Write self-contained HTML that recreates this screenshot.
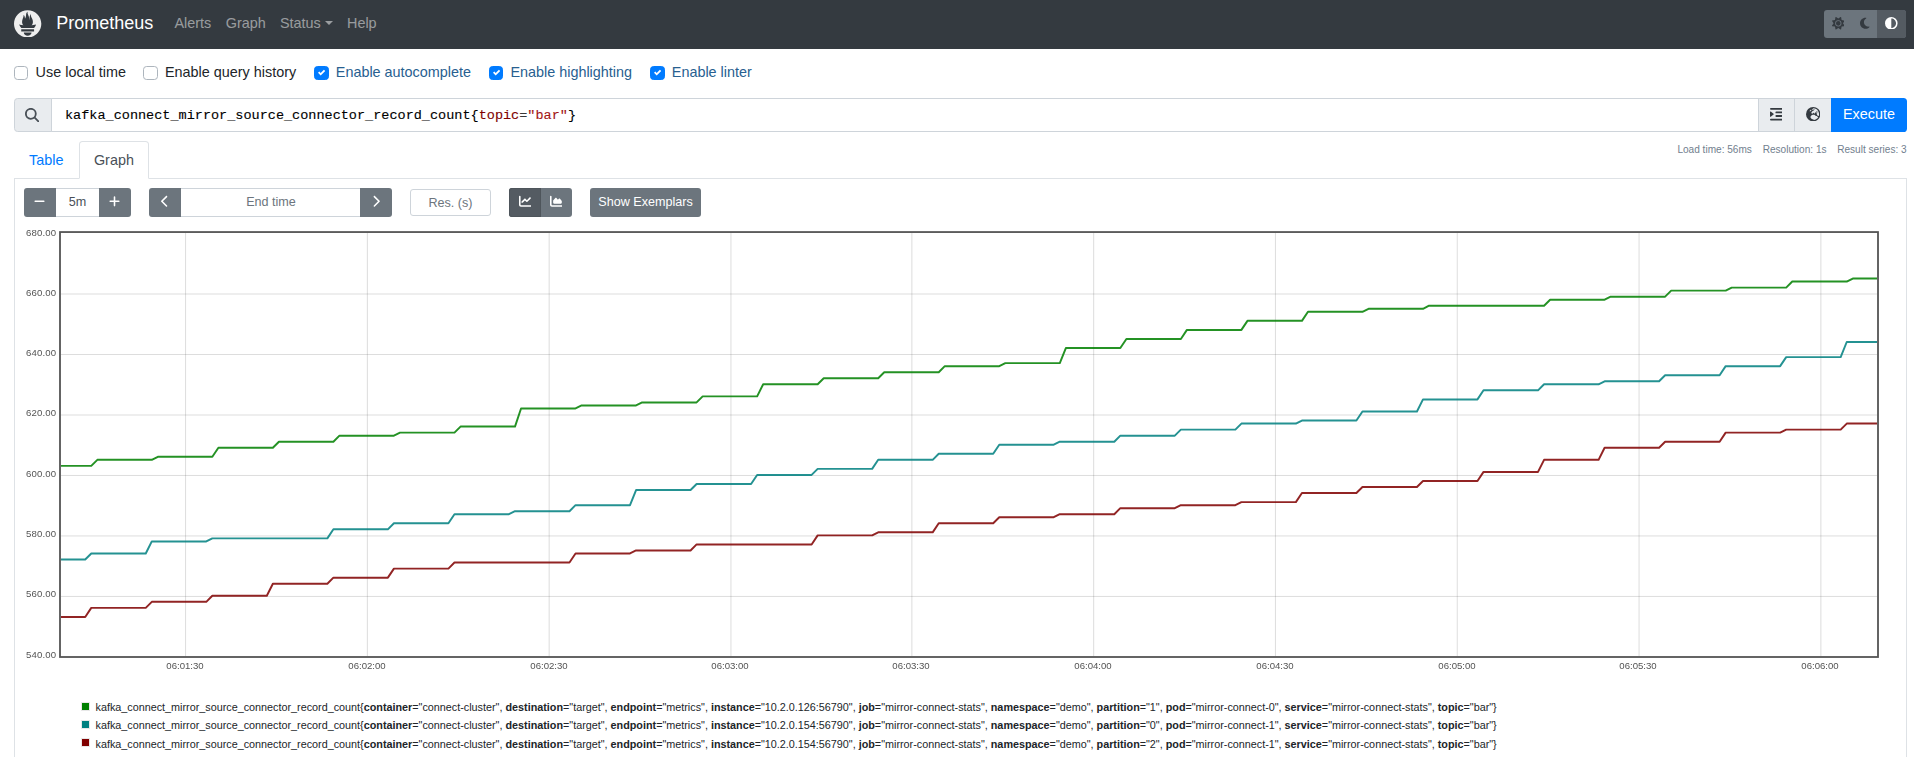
<!DOCTYPE html>
<html><head><meta charset="utf-8"><title>Prometheus Time Series Collection and Processing Server</title>
<style>
*{box-sizing:border-box;margin:0;padding:0}
html,body{width:1914px;height:757px;overflow:hidden;background:#fff}
body{font-family:"Liberation Sans",sans-serif;font-size:14.4px;color:#212529;position:relative;line-height:1.5}
.a{position:absolute;white-space:nowrap}
svg{display:block}
/* navbar */
#nav{left:0;top:0;width:1914px;height:49px;background:#343a40}
#brand{left:56.2px;top:10.2px;font-size:18px;line-height:27px;color:#fff}
.nl{top:12.6px;line-height:21.6px;color:rgba(255,255,255,.5)}
.caret{display:inline-block;margin-left:4.5px;vertical-align:2.3px;border-top:4.32px solid;border-right:4.32px solid transparent;border-left:4.32px solid transparent;width:0;height:0}
#theme{left:1824px;top:10px;width:82px;height:28px;background:#6c757d;border-radius:3px;overflow:hidden}
#theme .act{position:absolute;left:53px;top:0;width:29px;height:28px;background:#545b62}
/* checkboxes */
.cb{top:66px;width:14.4px;height:14.4px;border:1px solid #adb5bd;border-radius:3.6px;background:#fff}
.cb.on{background:#007bff;border-color:#007bff}
.cl{top:62.15px;line-height:21.6px}
.cl.on{color:#286090}
/* query */
#ig{left:14px;top:98px;width:1893px;height:34px}
#sa{left:0;top:0;width:38px;height:34px;background:#e9ecef;border:1px solid #ced4da;border-radius:3.6px 0 0 3.6px}
#qi{left:37px;top:0;width:1709px;height:34px;border:1px solid #ced4da;background:#fff}
#q{left:65px;top:105.8px;font-family:"Liberation Mono",monospace;font-size:13.52px;line-height:20px;color:#000;-webkit-text-stroke:0.12px}
#b1{left:1744px;top:0;width:37px;height:34px;background:#e9ecef;border:1px solid #ced4da}
#b2{left:1780px;top:0;width:38px;height:34px;background:#e9ecef;border:1px solid #ced4da}
#ex{left:1817px;top:0;width:76px;height:34px;background:#007bff;border-radius:0 3.6px 3.6px 0;color:#fff;text-align:center;line-height:33px}
#stats{left:0;top:141.5px;font-size:10.08px;line-height:15.1px;color:#71808e;word-spacing:0}
#stats span{position:absolute;top:0}
/* tabs */
#tabline{left:14px;top:178px;width:1893px;height:1px;background:#dee2e6}
#tabA{left:79px;top:141px;width:70px;height:38px;border:1px solid #dee2e6;border-bottom-color:#fff;border-radius:3.6px 3.6px 0 0;background:#fff}
#tT{left:29px;top:150.1px;color:#007bff;line-height:21.6px}
#tG{left:93.9px;top:150.1px;color:#495057;line-height:21.6px}
#pl{left:14px;top:178px;width:1px;height:600px;background:#dee2e6}
#pr{left:1906px;top:178px;width:1px;height:600px;background:#dee2e6}
/* controls */
.btn{top:188px;height:29px;background:#6c757d;color:#fff}
.inp{top:188px;height:29px;border:1px solid #ced4da;background:#fff;text-align:center;font-size:12.6px;line-height:27px;color:#495057}
.ph{color:#6c757d}
/* graph */
.yl{position:absolute;left:0;will-change:transform;width:56.2px;text-align:right;font-size:9.6px;letter-spacing:0.12px;line-height:13px;color:#545454}
.xl{position:absolute;top:658.5px;will-change:transform;width:60px;text-align:center;font-size:9.6px;line-height:13px;color:#545454}
.lg{position:absolute;left:95.5px;font-size:10.8px;letter-spacing:-0.002px;line-height:18.5px;color:#212529;white-space:nowrap}
.sw{position:absolute;left:81.6px;width:7px;height:7px;box-shadow:0 0 0 1px #e8e8e8}
</style></head><body>
<div class="a" id="nav"></div>
<svg class="a" style="left:14.2px;top:9.8px" width="27.8" height="27.5" viewBox="0 0 115.333 114"><path fill="#EEEEEE" d="M56.667,0.667C25.372,0.667,0,26.036,0,57.332c0,31.295,25.372,56.666,56.667,56.666s56.666-25.371,56.666-56.666C113.333,26.036,87.961,0.667,56.667,0.667z M56.667,106.722c-8.904,0-16.123-5.948-16.123-13.283H72.79C72.79,100.773,65.571,106.722,56.667,106.722z M83.297,89.04H30.034v-9.658h53.264V89.04z M83.106,74.411h-52.92c-0.176-0.203-0.356-0.403-0.526-0.609c-5.452-6.62-6.736-10.076-7.983-13.598c-0.021-0.116,6.611,1.355,11.314,2.413c0,0,2.42,0.56,5.958,1.205c-3.397-3.982-5.414-9.044-5.414-14.218c0-11.359,8.712-21.285,5.569-29.308c3.059,0.249,6.331,6.456,6.552,16.161c3.252-4.494,4.613-12.701,4.613-17.733c0-5.21,3.433-11.262,6.867-11.469c-3.061,5.045,0.793,9.37,4.219,20.099c1.285,4.03,1.121,10.812,2.113,15.113C63.797,33.534,65.333,20.5,71,16c-2.5,5.667,0.37,12.758,2.333,16.167c3.167,5.5,5.087,9.667,5.087,17.548c0,5.284-1.951,10.259-5.242,14.148c3.742-0.702,6.326-1.335,6.326-1.335l12.152-2.371C91.657,60.156,89.891,67.418,83.106,74.411z"/></svg>
<div class="a" id="brand">Prometheus</div>
<div class="a nl" style="left:174.4px">Alerts</div>
<div class="a nl" style="left:225.8px">Graph</div>
<div class="a nl" style="left:280px">Status<span class="caret"></span></div>
<div class="a nl" style="left:347px">Help</div>
<div class="a" id="theme"><div class="act"></div>
<svg class="a" style="left:7.90px;top:7.00px" width="12.60" height="12.60" viewBox="0 0 512 512"><path fill="#343a40" d="M361.5 1.2c5 2.100 8.600 6.600 9.600 11.900L391 121l107.900 19.800c5.300 1 9.800 4.600 11.900 9.600s1.500 10.700-1.600 15.200L446.900 256l62.300 90.300c3.100 4.500 3.700 10.200 1.600 15.200s-6.600 8.600-11.900 9.600L391 391 371.100 498.900c-1 5.300-4.600 9.800-9.600 11.900s-10.700 1.500-15.200-1.600L256 446.900l-90.300 62.300c-4.500 3.100-10.200 3.700-15.200 1.600s-8.600-6.600-9.600-11.900L121 391 13.100 371.100c-5.300-1-9.800-4.600-11.900-9.600s-1.500-10.700 1.600-15.200L65.100 256 2.800 165.700c-3.100-4.500-3.700-10.200-1.600-15.200s6.600-8.600 11.900-9.600L121 121 140.900 13.100c1-5.300 4.600-9.800 9.600-11.900s10.700-1.500 15.200 1.600L256 65.100 346.300 2.800c4.500-3.100 10.200-3.700 15.200-1.600zM160 256a96 96 0 1 1 192 0 96 96 0 1 1 -192 0zm224 0a128 128 0 1 0 -256 0 128 128 0 1 0 256 0z"/></svg>
<svg class="a" style="left:36.10px;top:7.00px" width="9.45" height="12.60" viewBox="0 0 384 512"><path fill="#343a40" d="M223.5 32C100 32 0 132.300 0 256S100 480 223.500 480c60.600 0 115.500-24.200 155.800-63.400c5-4.900 6.300-12.500 3.100-18.700s-10.100-9.700-17-8.500c-9.800 1.700-19.800 2.600-30.100 2.600c-96.900 0-175.500-78.800-175.500-176c0-65.800 36-123.100 89.300-153.300c6.100-3.500 9.200-10.500 7.700-17.300s-7.300-11.900-14.300-12.500c-6.300-.5-12.600-.8-19-.8z"/></svg>
<svg class="a" style="left:61.00px;top:6.90px" width="12.60" height="12.60" viewBox="0 0 512 512"><path fill="#fff" d="M448 256c0-106-86-192-192-192V448c106 0 192-86 192-192zM0 256a256 256 0 1 1 512 0A256 256 0 1 1 0 256z"/></svg>
</div>

<div class="a cb" style="left:14px;width:14px"></div><div class="a cl" style="left:35.6px">Use local time</div>
<div class="a cb" style="left:143.4px"></div><div class="a cl" style="left:165px">Enable query history</div>
<div class="a cb on" style="left:314.2px"><svg class="a" style="left:2.6px;top:2.2px" width="7.2" height="7.2" viewBox="0 0 8 8"><path fill="#fff" d="M6.564.75l-3.590 3.612-1.538-1.550L0 4.260l2.974 2.990L8 2.193z"/></svg></div><div class="a cl on" style="left:335.8px">Enable autocomplete</div>
<div class="a cb on" style="left:488.8px"><svg class="a" style="left:3.1px;top:2.2px" width="7.2" height="7.2" viewBox="0 0 8 8"><path fill="#fff" d="M6.564.75l-3.590 3.612-1.538-1.550L0 4.260l2.974 2.990L8 2.193z"/></svg></div><div class="a cl on" style="left:510.4px">Enable highlighting</div>
<div class="a cb on" style="left:650.2px"><svg class="a" style="left:2.6px;top:2.2px" width="7.2" height="7.2" viewBox="0 0 8 8"><path fill="#fff" d="M6.564.75l-3.590 3.612-1.538-1.550L0 4.260l2.974 2.990L8 2.193z"/></svg></div><div class="a cl on" style="left:671.8px">Enable linter</div>

<div class="a" id="ig">
<div class="a" id="qi"></div>
<div class="a" id="sa"><svg class="a" style="left:10.00px;top:9.10px" width="14.40" height="14.40" viewBox="0 0 512 512"><path fill="#495057" d="M416 208c0 45.900-14.900 88.300-40 122.700L502.600 457.400c12.500 12.500 12.500 32.800 0 45.300s-32.800 12.500-45.300 0L330.700 376c-34.400 25.200-76.800 40-122.700 40C93.100 416 0 322.900 0 208S93.100 0 208 0S416 93.100 416 208zM208 352a144 144 0 1 0 0-288 144 144 0 1 0 0 288z"/></svg></div>
<div class="a" id="b1"><svg class="a" style="left:10.90px;top:7.70px" width="12.60" height="14.40" viewBox="0 0 448 512"><path fill="#343a40" d="M0 64C0 46.300 14.300 32 32 32H416c17.700 0 32 14.300 32 32s-14.300 32-32 32H32C14.300 96 0 81.700 0 64zM192 192c0-17.700 14.300-32 32-32H416c17.700 0 32 14.300 32 32s-14.300 32-32 32H224c-17.700 0-32-14.300-32-32zm32 96H416c17.700 0 32 14.300 32 32s-14.300 32-32 32H224c-17.700 0-32-14.300-32-32s14.300-32 32-32zM0 448c0-17.700 14.300-32 32-32H416c17.700 0 32 14.300 32 32s-14.300 32-32 32H32c-17.700 0-32-14.300-32-32zM127.800 268.600L25.800 347.900C15.300 356.100 0 348.600 0 335.300V176.700c0-13.300 15.300-20.800 25.800-12.600l101.900 79.300c8.200 6.400 8.200 18.900 0 25.300z"/></svg></div>
<div class="a" id="b2"><svg class="a" style="left:11.10px;top:8.00px" width="14.40" height="14.40" viewBox="0 0 512 512"><path fill="#343a40" d="M266.300 48.300L232.500 73.600c-5.400 4-8.500 10.400-8.500 17.100v9.100c0 6.800 5.500 12.300 12.300 12.300c2.400 0 4.800-.7 6.800-2.100l41.800-27.900c2-1.300 4.400-2.100 6.800-2.100h1c6.200 0 11.300 5.100 11.300 11.300c0 3-1.200 5.900-3.300 8l-19.900 19.900c-5.800 5.800-12.900 10.200-20.700 12.800l-26.500 8.800c-5.800 1.900-9.600 7.300-9.600 13.400c0 3.700-1.500 7.300-4.100 10l-17.900 17.900c-6.400 6.400-9.900 15-9.900 24v4.300c0 16.400 13.600 29.700 29.900 29.700c11 0 21.200-6.200 26.100-16l4-8.100c2.400-4.800 7.400-7.900 12.800-7.900c4.500 0 8.700 2.100 11.400 5.700l16.300 21.700c2.100 2.900 5.500 4.500 9.100 4.500c8.400 0 13.900-8.900 10.100-16.400l-1.100-2.300c-3.500-7 0-15.500 7.500-18l21.200-7.100c7.600-2.500 12.700-9.600 12.700-17.600c0-10.300 8.300-18.600 18.600-18.600H400c8.800 0 16 7.200 16 16s-7.200 16-16 16H379.300c-7.200 0-14.200 2.900-19.300 8l-4.700 4.700c-2.100 2.100-3.300 5-3.300 8c0 6.200 5.100 11.300 11.300 11.300h11.300c6 0 11.800 2.400 16 6.600l6.500 6.500c1.800 1.800 2.800 4.300 2.800 6.800s-1 5-2.800 6.800l-7.500 7.500C386 262 384 266.900 384 272s2 10 5.700 13.700L408 304c10.200 10.200 24.100 16 38.600 16H454c6.500-20.200 10-41.700 10-64c0-111.400-87.600-202.400-197.700-207.700zm172 307.900c-3.700-2.600-8.200-4.100-13-4.100c-6 0-11.800-2.400-16-6.600L396 332c-7.700-7.700-18-12-28.900-12c-9.700 0-19.200-3.500-26.600-9.800L314 287.400c-11.600-9.900-26.400-15.400-41.700-15.400H251.400c-12.600 0-25 3.700-35.500 10.700L188.500 301c-17.800 11.900-28.500 31.900-28.500 53.300v3.200c0 17 6.700 33.300 18.700 45.300l16 16c8.500 8.500 20 13.300 32 13.300H248c13.300 0 24 10.700 24 24c0 2.500 .4 5 1.100 7.300c71.300-5.800 132.500-47.600 165.200-107.200zM0 256a256 256 0 1 1 512 0A256 256 0 1 1 0 256zM187.300 100.700c-6.200-6.200-16.400-6.200-22.600 0l-32 32c-6.200 6.200-6.200 16.400 0 22.600s16.400 6.200 22.600 0l32-32c6.200-6.200 6.200-16.400 0-22.600z"/></svg></div>
<div class="a" id="ex">Execute</div>
</div>
<div class="a" id="q">kafka_connect_mirror_source_connector_record_count{<span style="color:#800000">topic</span><span style="color:#383838">=</span><span style="color:#a31515">"bar"</span>}</div>
<div class="a" id="stats"><span style="left:1677.4px">Load time: 56ms</span><span style="left:1762.7px">Resolution: 1s</span><span style="left:1837.2px">Result series: 3</span></div>

<div class="a" id="tabline"></div>
<div class="a" id="tabA"></div>
<div class="a" id="tT">Table</div>
<div class="a" id="tG">Graph</div>
<div class="a" id="pl"></div><div class="a" id="pr"></div>

<!-- controls -->
<div class="a btn" style="left:24px;width:32px;border-radius:3px 0 0 3px"><svg class="a" style="left:10.40px;top:6.90px" width="11.03" height="12.60" viewBox="0 0 448 512"><path fill="#fff" d="M432 256c0 17.700-14.300 32-32 32L48 288c-17.700 0-32-14.300-32-32s14.300-32 32-32l352 0c17.700 0 32 14.300 32 32z"/></svg></div>
<div class="a inp" style="left:56px;width:43px;border-left:0;border-right:0">5m</div>
<div class="a btn" style="left:99px;width:32px;border-radius:0 3px 3px 0"><svg class="a" style="left:10.30px;top:6.80px" width="11.03" height="12.60" viewBox="0 0 448 512"><path fill="#fff" d="M256 80c0-17.700-14.300-32-32-32s-32 14.300-32 32V224H48c-17.700 0-32 14.300-32 32s14.300 32 32 32H192V432c0 17.700 14.300 32 32 32s32-14.300 32-32V288H400c17.700 0 32-14.300 32-32s-14.300-32-32-32H256V80z"/></svg></div>
<div class="a btn" style="left:149px;width:32px;border-radius:3px 0 0 3px"><svg class="a" style="left:12.10px;top:7.05px" width="7.88" height="12.60" viewBox="0 0 320 512"><path fill="#fff" d="M9.400 233.400c-12.500 12.500-12.500 32.800 0 45.300l192 192c12.500 12.500 32.800 12.500 45.300 0s12.500-32.800 0-45.300L77.300 256 246.600 86.600c12.500-12.500 12.500-32.800 0-45.300s-32.800-12.500-45.300 0l-192 192z"/></svg></div>
<div class="a inp ph" style="left:181px;width:179px;border-left:0;border-right:0;padding-left:1px">End time</div>
<div class="a btn" style="left:360px;width:32px;border-radius:0 3px 3px 0"><svg class="a" style="left:12.20px;top:7.05px" width="7.88" height="12.60" viewBox="0 0 320 512"><path fill="#fff" d="M310.600 233.400c12.500 12.500 12.500 32.800 0 45.300l-192 192c-12.500 12.500-32.800 12.500-45.300 0s-12.500-32.800 0-45.300L242.700 256 73.400 86.600c-12.500-12.500-12.500-32.800 0-45.300s32.800-12.500 45.300 0l192 192z"/></svg></div>
<div class="a inp ph" style="left:410px;width:81px;top:189px;height:27px;line-height:26.6px;border-radius:3px">Res. (s)</div>
<div class="a btn" style="left:509px;width:32px;border-radius:3px 0 0 3px;background:#545b62;box-shadow:inset 0 0 0 1px #4e555b"><svg class="a" style="left:9.50px;top:6.90px" width="12.60" height="12.60" viewBox="0 0 512 512"><path fill="#fff" d="M64 64c0-17.700-14.300-32-32-32S0 46.300 0 64V400c0 44.200 35.800 80 80 80H480c17.700 0 32-14.300 32-32s-14.300-32-32-32H80c-8.800 0-16-7.200-16-16V64zm406.600 86.600c12.500-12.500 12.500-32.800 0-45.300s-32.800-12.500-45.300 0L320 210.700l-57.400-57.400c-12.500-12.500-32.800-12.500-45.300 0l-112 112c-12.500 12.500-12.500 32.800 0 45.300s32.800 12.500 45.300 0L240 221.300l57.400 57.400c12.500 12.500 32.800 12.500 45.300 0l128-128z"/></svg></div>
<div class="a btn" style="left:541px;width:31px;border-radius:0 3px 3px 0"><svg class="a" style="left:8.50px;top:6.90px" width="12.60" height="12.60" viewBox="0 0 512 512"><path fill="#fff" d="M64 64c0-17.700-14.300-32-32-32S0 46.300 0 64V400c0 44.200 35.800 80 80 80H480c17.700 0 32-14.300 32-32s-14.300-32-32-32H80c-8.800 0-16-7.200-16-16V64zm96 288H448c17.700 0 32-14.300 32-32V251.800c0-7.600-2.700-15-7.700-20.800l-65.800-76.800c-12.100-14.200-33.700-15-46.900-1.800l-21 21c-10 10-26.400 9.200-35.400-1.600l-39.200-47c-12.600-15.100-35.700-15.400-48.700-.6L135.900 215c-5.100 5.800-7.900 13.300-7.900 21.100v84c0 17.700 14.300 32 32 32z"/></svg></div>
<div class="a btn" style="left:590px;width:111px;border-radius:3px;font-size:12.6px;line-height:28px;text-align:center">Show Exemplars</div>

<!-- graph -->
<svg class="a" style="left:0;top:0" width="1914" height="757" viewBox="0 0 1914 757">
<g stroke="rgba(84,84,84,0.22)" stroke-width="0.9"><line x1="185.56" y1="233" x2="185.56" y2="656"/><line x1="367.36" y1="233" x2="367.36" y2="656"/><line x1="549.16" y1="233" x2="549.16" y2="656"/><line x1="730.96" y1="233" x2="730.96" y2="656"/><line x1="911.86" y1="233" x2="911.86" y2="656"/><line x1="1093.66" y1="233" x2="1093.66" y2="656"/><line x1="1275.46" y1="233" x2="1275.46" y2="656"/><line x1="1457.26" y1="233" x2="1457.26" y2="656"/><line x1="1639.06" y1="233" x2="1639.06" y2="656"/><line x1="1820.86" y1="233" x2="1820.86" y2="656"/></g>
<g stroke="rgba(84,84,84,0.22)" stroke-width="0.9"><line x1="61" y1="596.44" x2="1877" y2="596.44"/><line x1="61" y1="535.96" x2="1877" y2="535.96"/><line x1="61" y1="475.48" x2="1877" y2="475.48"/><line x1="61" y1="414.99" x2="1877" y2="414.99"/><line x1="61" y1="354.51" x2="1877" y2="354.51"/><line x1="61" y1="294.03" x2="1877" y2="294.03"/></g>
<rect x="60" y="232.05" width="1818" height="424.95" fill="none" stroke="#545454" stroke-width="1.8"/>
<g fill="none" stroke-width="1.95" stroke-opacity="0.86" stroke-linejoin="round" stroke-linecap="butt">
<path stroke="#008000" d="M61.00 465.87 L91.27 465.87 L97.32 459.83 L151.80 459.83 L157.85 456.81 L212.33 456.81 L218.39 447.74 L272.87 447.74 L278.92 441.70 L333.40 441.70 L339.45 435.66 L393.93 435.66 L399.99 432.63 L454.47 432.63 L460.52 426.59 L515.00 426.59 L521.05 408.46 L575.53 408.46 L581.59 405.44 L636.07 405.44 L642.12 402.42 L696.60 402.42 L702.65 396.38 L757.13 396.38 L763.19 384.29 L817.67 384.29 L823.72 378.25 L878.20 378.25 L884.25 372.21 L938.73 372.21 L944.79 366.16 L999.27 366.16 L1005.32 363.14 L1059.80 363.14 L1065.85 348.03 L1120.33 348.03 L1126.39 338.97 L1180.87 338.97 L1186.92 329.91 L1241.40 329.91 L1247.45 320.84 L1301.93 320.84 L1307.99 311.78 L1362.47 311.78 L1368.52 308.76 L1423.00 308.76 L1429.05 305.73 L1544.07 305.73 L1550.12 299.69 L1604.60 299.69 L1610.65 296.67 L1665.13 296.67 L1671.19 290.63 L1725.67 290.63 L1731.72 287.61 L1786.20 287.61 L1792.25 281.56 L1846.73 281.56 L1852.79 278.54 L1877.00 278.54"/>
<path stroke="#008080" d="M61.00 559.53 L85.21 559.53 L91.27 553.49 L145.75 553.49 L151.80 541.41 L206.28 541.41 L212.33 538.38 L327.35 538.38 L333.40 529.32 L387.88 529.32 L393.93 523.28 L448.41 523.28 L454.47 514.21 L508.95 514.21 L515.00 511.19 L569.48 511.19 L575.53 505.15 L630.01 505.15 L636.07 490.04 L690.55 490.04 L696.60 484.00 L751.08 484.00 L757.13 474.93 L811.61 474.93 L817.67 468.89 L872.15 468.89 L878.20 459.83 L932.68 459.83 L938.73 453.78 L993.21 453.78 L999.27 444.72 L1053.75 444.72 L1059.80 441.70 L1114.28 441.70 L1120.33 435.66 L1174.81 435.66 L1180.87 429.61 L1235.35 429.61 L1241.40 423.57 L1295.88 423.57 L1301.93 420.55 L1356.41 420.55 L1362.47 411.48 L1416.95 411.48 L1423.00 399.40 L1477.48 399.40 L1483.53 390.33 L1538.01 390.33 L1544.07 384.29 L1598.55 384.29 L1604.60 381.27 L1659.08 381.27 L1665.13 375.23 L1719.61 375.23 L1725.67 366.16 L1780.15 366.16 L1786.20 357.10 L1840.68 357.10 L1846.73 341.99 L1877.00 341.99"/>
<path stroke="#800000" d="M61.00 616.94 L85.21 616.94 L91.27 607.88 L145.75 607.88 L151.80 601.83 L206.28 601.83 L212.33 595.79 L266.81 595.79 L272.87 583.71 L327.35 583.71 L333.40 577.66 L387.88 577.66 L393.93 568.60 L448.41 568.60 L454.47 562.56 L569.48 562.56 L575.53 553.49 L630.01 553.49 L636.07 550.47 L690.55 550.47 L696.60 544.43 L811.61 544.43 L817.67 535.36 L872.15 535.36 L878.20 532.34 L932.68 532.34 L938.73 523.28 L993.21 523.28 L999.27 517.23 L1053.75 517.23 L1059.80 514.21 L1114.28 514.21 L1120.33 508.17 L1174.81 508.17 L1180.87 505.15 L1235.35 505.15 L1241.40 502.13 L1295.88 502.13 L1301.93 493.06 L1356.41 493.06 L1362.47 487.02 L1416.95 487.02 L1423.00 480.98 L1477.48 480.98 L1483.53 471.91 L1538.01 471.91 L1544.07 459.83 L1598.55 459.83 L1604.60 447.74 L1659.08 447.74 L1665.13 441.70 L1719.61 441.70 L1725.67 432.63 L1780.15 432.63 L1786.20 429.61 L1840.68 429.61 L1846.73 423.57 L1877.00 423.57"/>
</g>
</svg>
<div class="yl" style="top:226.0px">680.00</div><div class="yl" style="top:286.0px">660.00</div><div class="yl" style="top:346.0px">640.00</div><div class="yl" style="top:406.0px">620.00</div><div class="yl" style="top:467.0px">600.00</div><div class="yl" style="top:527.0px">580.00</div><div class="yl" style="top:587.0px">560.00</div><div class="yl" style="top:648.0px">540.00</div>
<div class="xl" style="left:154.9px">06:01:30</div><div class="xl" style="left:336.7px">06:02:00</div><div class="xl" style="left:518.5px">06:02:30</div><div class="xl" style="left:700.3px">06:03:00</div><div class="xl" style="left:881.2px">06:03:30</div><div class="xl" style="left:1063.0px">06:04:00</div><div class="xl" style="left:1244.8px">06:04:30</div><div class="xl" style="left:1426.6px">06:05:00</div><div class="xl" style="left:1608.4px">06:05:30</div><div class="xl" style="left:1790.2px">06:06:00</div>
<div class="sw" style="top:703.0px;background:#008000"></div><div class="lg" style="top:698.1px">kafka_connect_mirror_source_connector_record_count{<b>container</b>="connect-cluster", <b>destination</b>="target", <b>endpoint</b>="metrics", <b>instance</b>="10.2.0.126:56790", <b>job</b>="mirror-connect-stats", <b>namespace</b>="demo", <b>partition</b>="1", <b>pod</b>="mirror-connect-0", <b>service</b>="mirror-connect-stats", <b>topic</b>="bar"}</div><div class="sw" style="top:721.4px;background:#008080"></div><div class="lg" style="top:715.8px">kafka_connect_mirror_source_connector_record_count{<b>container</b>="connect-cluster", <b>destination</b>="target", <b>endpoint</b>="metrics", <b>instance</b>="10.2.0.154:56790", <b>job</b>="mirror-connect-stats", <b>namespace</b>="demo", <b>partition</b>="0", <b>pod</b>="mirror-connect-1", <b>service</b>="mirror-connect-stats", <b>topic</b>="bar"}</div><div class="sw" style="top:739.3px;background:#800000"></div><div class="lg" style="top:735.1px">kafka_connect_mirror_source_connector_record_count{<b>container</b>="connect-cluster", <b>destination</b>="target", <b>endpoint</b>="metrics", <b>instance</b>="10.2.0.154:56790", <b>job</b>="mirror-connect-stats", <b>namespace</b>="demo", <b>partition</b>="2", <b>pod</b>="mirror-connect-1", <b>service</b>="mirror-connect-stats", <b>topic</b>="bar"}</div>
</body></html>
